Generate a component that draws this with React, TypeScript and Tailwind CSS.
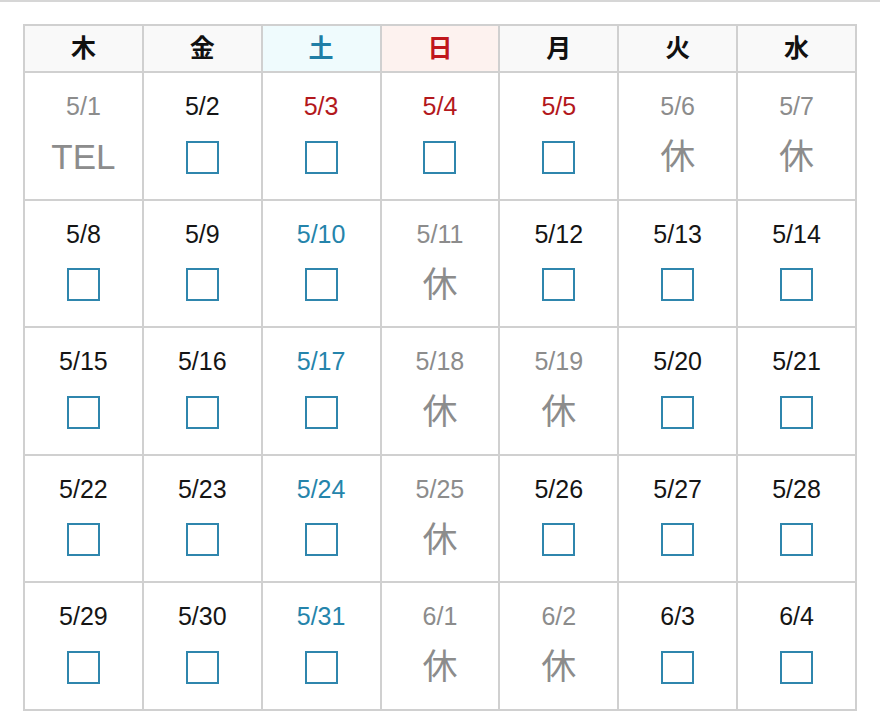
type Kind = "open" | "closed" | "tel";
type Tone = "black" | "gray" | "red" | "blue";

type Day = { date: string; tone: Tone; kind: Kind };

const headers = [
  { label: "木", cls: "bg-[#f9f9f9] text-[#111]" },
  { label: "金", cls: "bg-[#f9f9f9] text-[#111]" },
  { label: "土", cls: "bg-[#effbfd] text-[#1f7ea6]" },
  { label: "日", cls: "bg-[#fdf2ef] text-[#c0161b]" },
  { label: "月", cls: "bg-[#f9f9f9] text-[#111]" },
  { label: "火", cls: "bg-[#f9f9f9] text-[#111]" },
  { label: "水", cls: "bg-[#f9f9f9] text-[#111]" },
];

const toneCls: Record<Tone, string> = {
  black: "text-[#151515]",
  gray: "text-[#8c8c8c]",
  red: "text-[#b3181c]",
  blue: "text-[#2584ab]",
};

const d = (date: string, tone: Tone, kind: Kind): Day => ({ date, tone, kind });

const weeks: Day[][] = [
  [
    d("5/1", "gray", "tel"),
    d("5/2", "black", "open"),
    d("5/3", "red", "open"),
    d("5/4", "red", "open"),
    d("5/5", "red", "open"),
    d("5/6", "gray", "closed"),
    d("5/7", "gray", "closed"),
  ],
  [
    d("5/8", "black", "open"),
    d("5/9", "black", "open"),
    d("5/10", "blue", "open"),
    d("5/11", "gray", "closed"),
    d("5/12", "black", "open"),
    d("5/13", "black", "open"),
    d("5/14", "black", "open"),
  ],
  [
    d("5/15", "black", "open"),
    d("5/16", "black", "open"),
    d("5/17", "blue", "open"),
    d("5/18", "gray", "closed"),
    d("5/19", "gray", "closed"),
    d("5/20", "black", "open"),
    d("5/21", "black", "open"),
  ],
  [
    d("5/22", "black", "open"),
    d("5/23", "black", "open"),
    d("5/24", "blue", "open"),
    d("5/25", "gray", "closed"),
    d("5/26", "black", "open"),
    d("5/27", "black", "open"),
    d("5/28", "black", "open"),
  ],
  [
    d("5/29", "black", "open"),
    d("5/30", "black", "open"),
    d("5/31", "blue", "open"),
    d("6/1", "gray", "closed"),
    d("6/2", "gray", "closed"),
    d("6/3", "black", "open"),
    d("6/4", "black", "open"),
  ],
];

const DayCell = ({ day }: { day: Day }) => (
  <td className="border-2 border-[#d0d0d0] p-0 align-top">
    <div className="flex flex-col items-center pt-[18px]">
      <span className={`text-[25px] leading-[30px] ${toneCls[day.tone]}`}>{day.date}</span>
      <div className="mt-[19px] h-[34px] flex items-center justify-center">
        {day.kind === "open" && (
          <span className="block w-[33px] h-[33px] border-2 border-[#2f86ad] bg-white" />
        )}
        {day.kind === "closed" && (
          <span className="text-[35px] leading-[34px] text-[#8c8c8c]">休</span>
        )}
        {day.kind === "tel" && (
          <span className="text-[35px] leading-[34px] text-[#8c8c8c]">TEL</span>
        )}
      </div>
    </div>
  </td>
);

const App = () => {
  return (
    <div
      className="w-[880px] h-[720px] bg-white overflow-hidden"
      style={{ fontFamily: '"Liberation Sans", "Noto Sans CJK JP", sans-serif' }}
    >
      <div className="h-[2px] bg-[#d6d6d6]" />

      <div className="pt-[22px] pl-[23px]">
        <table className="w-[834px] table-fixed border-collapse">
          <thead>
            <tr className="h-[47px]">
              {headers.map((h) => (
                <th
                  key={h.label}
                  className={`border-2 border-[#d0d0d0] p-0 text-[25px] font-bold leading-none ${h.cls}`}
                >
                  {h.label}
                </th>
              ))}
            </tr>
          </thead>
          <tbody>
            {weeks.map((week, i) => (
              <tr key={i} className="h-[127.6px]">
                {week.map((day) => (
                  <DayCell key={day.date} day={day} />
                ))}
              </tr>
            ))}
          </tbody>
        </table>
      </div>
    </div>
  );
};

export default App;
